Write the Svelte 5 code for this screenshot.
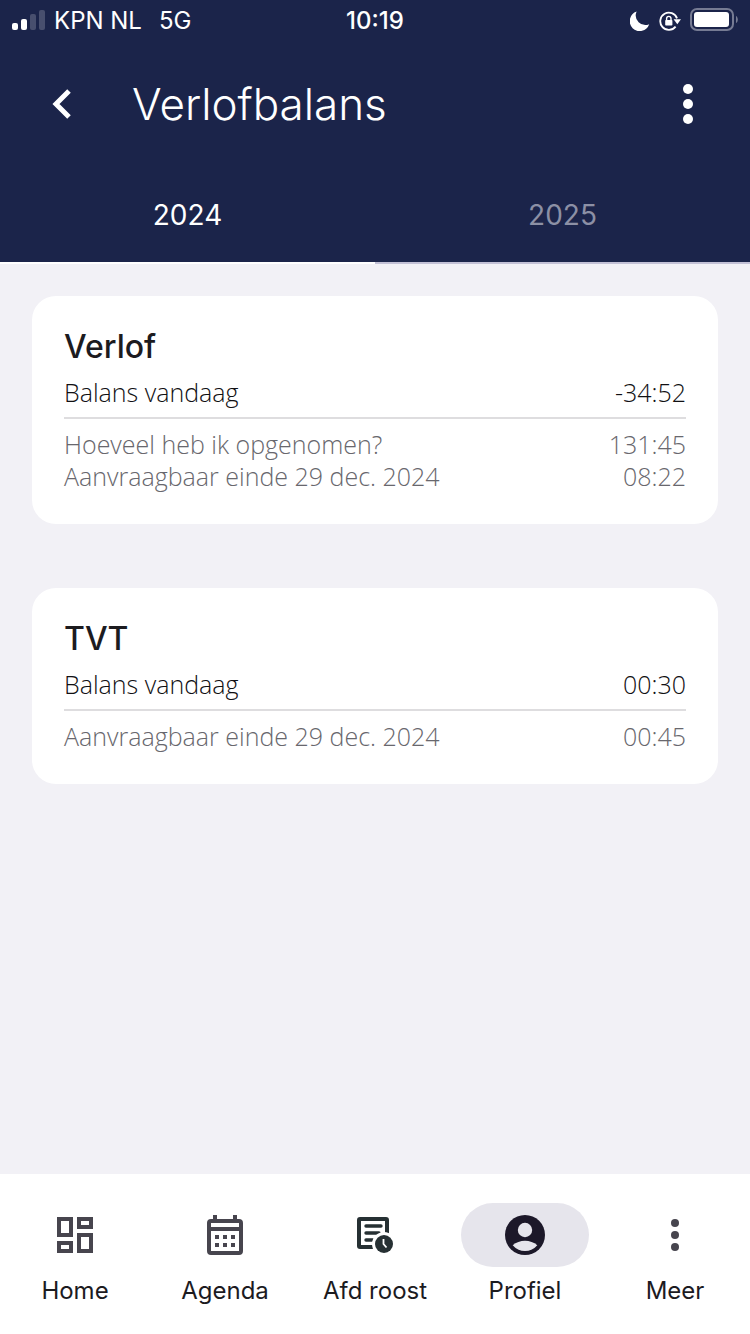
<script lang="ts">
  type Row = { label: string; value: string };
  type Balance = { title: string; today: string; details: Row[] };

  const years = ["2024", "2025"];
  let activeYear = $state("2024");

  const balances: Balance[] = [
    {
      title: "Verlof",
      today: "-34:52",
      details: [
        { label: "Hoeveel heb ik opgenomen?", value: "131:45" },
        { label: "Aanvraagbaar einde 29 dec. 2024", value: "08:22" },
      ],
    },
    {
      title: "TVT",
      today: "00:30",
      details: [{ label: "Aanvraagbaar einde 29 dec. 2024", value: "00:45" }],
    },
  ];

  const navItems = [
    { id: "home", label: "Home" },
    { id: "agenda", label: "Agenda" },
    { id: "roster", label: "Afd roost" },
    { id: "profile", label: "Profiel" },
    { id: "more", label: "Meer" },
  ];
  let activeNav = $state("profile");
</script>

{#snippet navIcon(id: string)}
  <svg viewBox="0 0 48 48" width="48" height="48" aria-hidden="true">
    {#if id === "home"}
      <g fill="none" stroke="#47454e" stroke-width="4">
        <rect x="8" y="8" width="12" height="16" />
        <rect x="28" y="8" width="12" height="8" />
        <rect x="8" y="32" width="12" height="8" />
        <rect x="28" y="24" width="12" height="16" />
      </g>
    {:else if id === "agenda"}
      <g fill="none" stroke="#47454e" stroke-width="4">
        <rect x="8" y="10" width="32" height="32" rx="2" />
        <path d="M8 18H40M14 4V10M34 4V10" />
        <path d="M14 26H34M14 34H34" stroke-dasharray="4 4" />
      </g>
    {:else if id === "roster"}
      <g fill="none" stroke="#263033" stroke-width="4">
        <rect x="8" y="8" width="28" height="28" rx="1" />
        <path d="M15 15H30M15 22H28M15 29H22" stroke-width="3.4" stroke-linecap="round" />
      </g>
      <circle cx="33" cy="33" r="12" fill="#fff" />
      <circle cx="33" cy="33" r="9" fill="#263033" />
      <path d="M32.5 28V33L35.5 36.5" fill="none" stroke="#fff" stroke-width="1.8" />
    {:else if id === "profile"}
      <circle cx="24" cy="24" r="20" fill="#1c1829" />
      <circle cx="24" cy="19" r="7.2" fill="#e6e5ec" />
      <path
        d="M11.7 34.2C15.1 31.4 19.4 29.8 24 29.8S32.9 31.4 36.3 34.2A16 16 0 0 1 11.7 34.2Z"
        fill="#e6e5ec"
      />
    {:else}
      <g fill="#47454e">
        <circle cx="24" cy="12" r="4" />
        <circle cx="24" cy="24" r="4" />
        <circle cx="24" cy="36" r="4" />
      </g>
    {/if}
  </svg>
{/snippet}

<div class="screen">
  <header class="header">
    <div class="status">
      <div class="status-left">
        <svg viewBox="0 0 33 22" width="33" height="22" aria-hidden="true">
          <g fill="#fff">
            <rect x="0" y="13" width="6" height="7" rx="2" />
            <rect x="9" y="9" width="6" height="11" rx="2" />
            <rect x="18" y="4" width="6" height="16" rx="2" opacity="0.2" />
            <rect x="27" y="0" width="6" height="20" rx="2" opacity="0.2" />
          </g>
        </svg>
        <span class="carrier">KPN NL</span>
        <span>5G</span>
      </div>
      <div class="time">10:19</div>
      <div class="status-right">
        <svg viewBox="0 0 20 20" width="20" height="20" aria-hidden="true">
          <path d="M6.6.6A10 10 0 1 0 19.2 13.2A9.6 9.6 0 0 1 6.6.6Z" fill="#fff" />
        </svg>
        <svg viewBox="0 0 22 20" width="22" height="20" aria-hidden="true">
          <path
            d="M16.6 15.6A8.6 8.6 0 1 1 18 7.4"
            fill="none"
            stroke="#fff"
            stroke-width="1.8"
          />
          <path d="M14.6 8.2H22L18.3 13.2Z" fill="#fff" />
          <rect x="6.2" y="9" width="7.2" height="5.6" rx="0.8" fill="#fff" />
          <path
            d="M7.6 9.4V7.6A2.2 2.2 0 0 1 12 7.6V9.4"
            fill="none"
            stroke="#fff"
            stroke-width="1.4"
          />
        </svg>
        <svg viewBox="0 0 48 26" width="48" height="26" aria-hidden="true">
          <rect
            x="1"
            y="1"
            width="42"
            height="21"
            rx="6"
            fill="none"
            stroke="#767b93"
            stroke-width="2"
          />
          <rect x="4" y="4" width="35" height="15" rx="3" fill="#fff" />
          <path d="M46 8C48.4 9 48.4 14 46 15Z" fill="#767b93" />
        </svg>
      </div>
    </div>

    <div class="appbar">
      <button class="icon-button" type="button" aria-label="Terug">
        <svg viewBox="0 0 48 48" width="48" height="48" aria-hidden="true">
          <path d="M31 11L18 24L31 37" fill="none" stroke="#fff" stroke-width="5" />
        </svg>
      </button>
      <h1 class="title">Verlofbalans</h1>
      <button class="icon-button" type="button" aria-label="Opties">
        <svg viewBox="0 0 48 48" width="48" height="48" aria-hidden="true">
          <g fill="#fff">
            <circle cx="24" cy="9" r="5" />
            <circle cx="24" cy="24" r="5" />
            <circle cx="24" cy="39" r="5" />
          </g>
        </svg>
      </button>
    </div>

    <div class="tabs" role="tablist">
      {#each years as year}
        <button
          class="tab"
          class:tab-active={year === activeYear}
          type="button"
          role="tab"
          aria-selected={year === activeYear}
          onclick={() => (activeYear = year)}
        >
          {year}
        </button>
      {/each}
    </div>
  </header>

  <main class="content">
    {#each balances as balance}
      <section class="card">
        <h2 class="card-title">{balance.title}</h2>
        <dl class="rows">
          <div class="row row-today">
            <dt>Balans vandaag</dt>
            <dd>{balance.today}</dd>
          </div>
          {#each balance.details as detail}
            <div class="row">
              <dt>{detail.label}</dt>
              <dd>{detail.value}</dd>
            </div>
          {/each}
        </dl>
      </section>
    {/each}
  </main>

  <nav class="nav">
    {#each navItems as item}
      <button
        class="nav-item"
        class:nav-active={item.id === activeNav}
        type="button"
        aria-current={item.id === activeNav ? "page" : undefined}
        onclick={() => (activeNav = item.id)}
      >
        <span class="nav-pill">{@render navIcon(item.id)}</span>
        <span>{item.label}</span>
      </button>
    {/each}
  </nav>
</div>

<style>
  :global(body) {
    margin: 0;
    background: #f2f1f6;
  }

  .screen {
    display: flex;
    flex-direction: column;
    min-height: 100vh;
    font-family: Inter, "Liberation Sans", sans-serif;
    color: #1c1b1f;
  }

  svg {
    display: block;
  }

  button {
    padding: 0;
    border: 0;
    background: none;
    font: inherit;
    color: inherit;
    cursor: pointer;
  }

  .header {
    background: #1b244a;
    color: #fff;
  }

  .status {
    display: grid;
    grid-template-columns: 1fr auto 1fr;
    align-items: center;
    padding: 2px 12px 0;
    font-size: 24px;
    line-height: 38px;
  }
  .status-left,
  .status-right {
    display: flex;
    align-items: center;
  }
  .status-left {
    gap: 9px;
  }
  .carrier {
    margin-right: 8px;
  }
  .time {
    font-weight: 500;
  }
  .status-right {
    justify-content: flex-end;
    gap: 9px;
  }

  .appbar {
    display: flex;
    align-items: center;
    height: 128px;
    padding: 0 38px;
  }
  .icon-button {
    flex: none;
  }
  .title {
    flex: 1;
    margin: 0 0 0 46px;
    font-size: 44px;
    font-weight: 300;
    line-height: 56px;
  }

  .tabs {
    display: flex;
  }
  .tab {
    flex: 1;
    height: 96px;
    border-bottom: 2px solid #c3c1d6;
    font-size: 28px;
    color: #8c90a5;
  }
  .tab-active {
    border-bottom-color: #fff;
    color: #fff;
  }

  .content {
    flex: 1;
    display: flex;
    flex-direction: column;
    gap: 64px;
    padding: 32px;
  }

  .card {
    padding: 32px;
    border-radius: 24px;
    background: #fff;
  }
  .card-title {
    margin: 0 0 8px;
    font-size: 32px;
    font-weight: 500;
    line-height: 38px;
  }
  .rows {
    margin: 0;
    padding-top: 2px;
    font-family: "Open Sans", "Noto Sans", sans-serif;
    font-size: 25px;
    font-weight: 300;
    line-height: 32px;
  }
  .row {
    display: flex;
    justify-content: space-between;
    color: #68676d;
  }
  .row-today {
    margin-bottom: 9px;
    padding-bottom: 9px;
    border-bottom: 2px solid #dedddf;
    color: #111013;
  }
  dd {
    margin: 0;
  }

  .nav {
    display: flex;
    padding: 29px 0 27px;
    background: #fff;
  }
  .nav-item {
    flex: 1;
    display: flex;
    flex-direction: column;
    align-items: center;
    gap: 8px;
    font-size: 24px;
    line-height: 32px;
  }
  .nav-pill {
    display: flex;
    align-items: center;
    justify-content: center;
    width: 128px;
    height: 64px;
    border-radius: 32px;
  }
  .nav-active .nav-pill {
    background: #e6e5ec;
  }
</style>
